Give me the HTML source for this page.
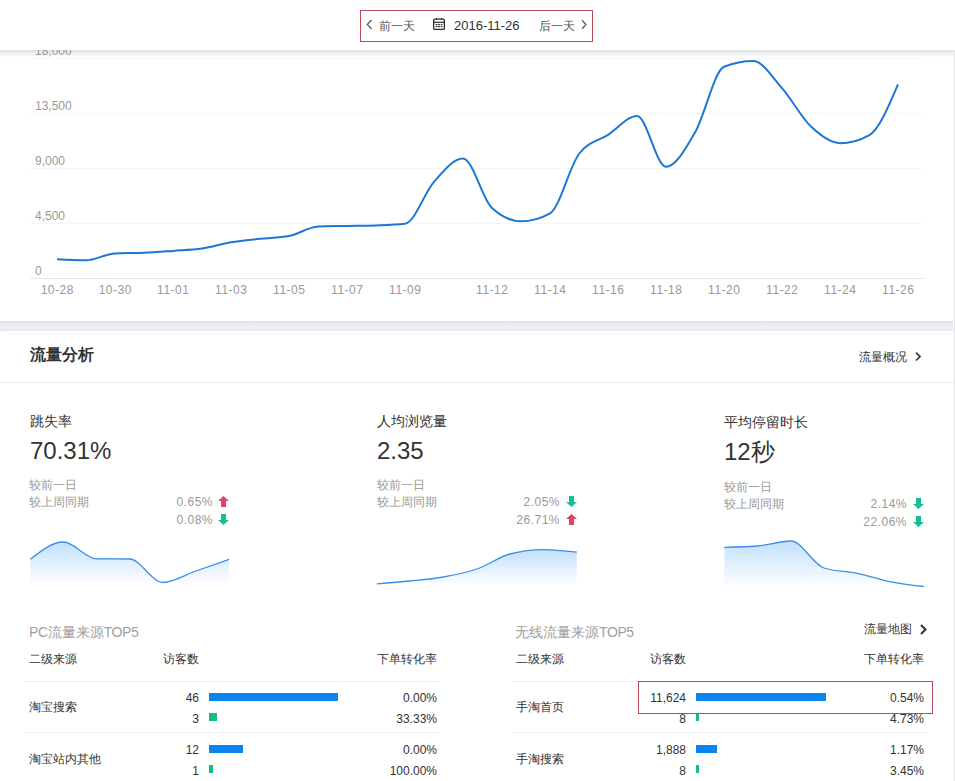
<!DOCTYPE html>
<html><head><meta charset="utf-8">
<style>
*{margin:0;padding:0;box-sizing:border-box}
html,body{width:955px;height:781px;overflow:hidden;background:#fff;font-family:"Liberation Sans",sans-serif;color:#333}
.a{position:absolute;white-space:nowrap}
#hdr{position:absolute;left:0;top:0;width:955px;height:50px;background:#fff;z-index:5}
#shd{position:absolute;left:0;top:50px;width:955px;height:7px;background:linear-gradient(#e1e1e1,#e9e9e9 30%,#f4f4f4 60%,#fff)}
#box{position:absolute;left:360px;top:10px;width:233px;height:32px;border:1px solid #b94955}
.hd{font-size:12px;line-height:13px;color:#555}
.yl{position:absolute;left:35px;font-size:12px;line-height:12px;color:#999}
.xl{position:absolute;top:284px;width:40px;text-align:center;font-size:12px;line-height:12px;color:#999;letter-spacing:0.5px;text-indent:0.5px}
#vline{position:absolute;left:954px;top:50px;width:1px;height:731px;background:#e3e3e3}
#band{position:absolute;left:0;top:321px;width:953px;height:10px;background:linear-gradient(#dfe2e6 0,#dfe2e6 10%,#e8eaef 20%,#edeef6 50%,#eceef5 80%,#e6e7ec 90%,#e6e7ec 100%)}
.lbl{font-size:14px;line-height:14px;color:#333}
.big{font-size:24px;line-height:24px;color:#333}
.cmp{font-size:12px;line-height:12px;color:#999}
.val{font-size:12px;line-height:12px;color:#999;text-align:right;width:60px;letter-spacing:0.5px}
.t12{font-size:12px;line-height:12px;color:#333}
.num{font-size:12px;line-height:12px;color:#333;text-align:right;width:80px}
.ttl{font-size:14px;line-height:14px;color:#a0a0a0}
.ttl span{letter-spacing:-0.4px}
.sep{position:absolute;height:1px;background:#efefef}
.bb{position:absolute;height:8px;background:#0c84ee}
.tb{position:absolute;height:8px;background:#17bb8e}
</style></head><body>
<div id="shd"></div>
<svg width="955" height="781" style="position:absolute;left:0;top:0">
<defs>
<linearGradient id="g1" x1="0" y1="0" x2="0" y2="1"><stop offset="0" stop-color="#1f8bf5" stop-opacity="0.27"/><stop offset="1" stop-color="#1f8bf5" stop-opacity="0.01"/></linearGradient>
</defs>
<g fill="#f5f5f5">
<rect x="30" y="58" width="894" height="1"/>
<rect x="30" y="113" width="894" height="1"/>
<rect x="30" y="168" width="894" height="1"/>
<rect x="30" y="223" width="894" height="1"/>
</g>
<rect x="30" y="278" width="894" height="1" fill="#e8e8e8"/>
<path d="M57.00 259.30 C66.67 259.80 76.33 260.30 86.00 260.30 C95.67 260.30 105.33 253.80 115.00 253.40 C124.67 253.00 134.33 253.20 144.00 252.80 C153.67 252.40 163.33 251.60 173.00 250.90 C182.67 250.20 192.33 250.03 202.00 248.60 C211.67 247.17 221.33 243.93 231.00 242.30 C240.67 240.67 250.33 239.85 260.00 238.80 C269.67 237.75 279.33 237.87 289.00 236.00 C298.67 234.13 308.33 226.90 318.00 226.50 C327.67 226.10 337.33 226.08 347.00 225.90 C356.67 225.72 366.33 225.73 376.00 225.40 C385.67 225.07 395.33 224.87 405.00 223.80 C414.67 222.73 424.33 192.80 434.00 181.90 C443.67 171.00 453.33 158.40 463.00 158.40 C472.67 158.40 482.33 199.13 492.00 208.00 C501.67 216.87 511.33 221.30 521.00 221.30 C530.67 221.30 540.33 218.63 550.00 213.30 C559.67 207.97 569.33 166.80 579.00 154.00 C588.67 141.20 598.33 141.13 608.00 134.80 C617.67 128.47 627.33 116.00 637.00 116.00 C646.67 116.00 656.33 166.70 666.00 166.70 C675.67 166.70 685.33 149.15 695.00 132.50 C704.67 115.85 714.33 70.73 724.00 66.80 C733.67 62.87 743.33 60.90 753.00 60.90 C762.67 60.90 772.33 77.25 782.00 88.20 C791.67 99.15 801.33 117.43 811.00 126.60 C820.67 135.77 830.33 143.20 840.00 143.20 C849.67 143.20 859.33 140.57 869.00 135.30 C878.67 130.03 888.33 107.22 898.00 84.40" fill="none" stroke="#1c78d4" stroke-width="2"/>
<path d="M30.30 559.30 C41.34 550.65 52.38 542.00 63.42 542.00 C74.46 542.00 85.50 558.67 96.54 558.80 C107.58 558.93 118.62 558.87 129.66 559.00 C140.70 559.13 151.74 582.50 162.78 582.50 C173.82 582.50 184.86 574.85 195.90 571.00 C206.94 567.15 217.98 563.27 229.02 559.40 L229.00 583.50 L30.30 583.50 Z" fill="url(#g1)"/>
<path d="M30.30 559.30 C41.34 550.65 52.38 542.00 63.42 542.00 C74.46 542.00 85.50 558.67 96.54 558.80 C107.58 558.93 118.62 558.87 129.66 559.00 C140.70 559.13 151.74 582.50 162.78 582.50 C173.82 582.50 184.86 574.85 195.90 571.00 C206.94 567.15 217.98 563.27 229.02 559.40" fill="none" stroke="#3a8ee6" stroke-width="1.3"/>
<path d="M376.80 583.80 C387.91 582.97 399.02 582.13 410.13 581.00 C421.24 579.87 432.35 579.00 443.46 577.00 C454.57 575.00 465.68 572.83 476.79 569.00 C487.90 565.17 499.01 556.93 510.12 554.00 C521.23 551.07 532.34 549.60 543.45 549.60 C554.56 549.60 565.67 550.90 576.78 552.20 L576.80 584.00 L376.80 584.00 Z" fill="url(#g1)"/>
<path d="M376.80 583.80 C387.91 582.97 399.02 582.13 410.13 581.00 C421.24 579.87 432.35 579.00 443.46 577.00 C454.57 575.00 465.68 572.83 476.79 569.00 C487.90 565.17 499.01 556.93 510.12 554.00 C521.23 551.07 532.34 549.60 543.45 549.60 C554.56 549.60 565.67 550.90 576.78 552.20" fill="none" stroke="#3a8ee6" stroke-width="1.3"/>
<path d="M724.30 547.30 C735.38 547.08 746.47 546.87 757.55 546.00 C768.63 545.13 779.72 541.00 790.80 541.00 C801.88 541.00 812.97 564.47 824.05 568.00 C835.13 571.53 846.22 571.00 857.30 573.30 C868.38 575.60 879.47 579.60 890.55 581.80 C901.63 584.00 912.72 585.25 923.80 586.50 L923.80 586.50 L724.30 586.50 Z" fill="url(#g1)"/>
<path d="M724.30 547.30 C735.38 547.08 746.47 546.87 757.55 546.00 C768.63 545.13 779.72 541.00 790.80 541.00 C801.88 541.00 812.97 564.47 824.05 568.00 C835.13 571.53 846.22 571.00 857.30 573.30 C868.38 575.60 879.47 579.60 890.55 581.80 C901.63 584.00 912.72 585.25 923.80 586.50" fill="none" stroke="#3a8ee6" stroke-width="1.3"/>
</svg>
<div id="hdr">
 <div id="box"></div>
 <svg class="a" style="left:365px;top:18px" width="9" height="13" viewBox="0 0 9 13"><path d="M6.5 2 L2.3 6.5 L6.5 11" fill="none" stroke="#666" stroke-width="1.4"/></svg>
 <div class="a hd" style="left:379px;top:20px">前一天</div>
 <svg class="a" style="left:433px;top:18px" width="12" height="12" viewBox="0 0 12 12"><g fill="none" stroke="#2a2a2a"><rect x="0.65" y="1.15" width="10.7" height="10.2" rx="1.2" stroke-width="1.3"/><path d="M0.6 4.3H11.4" stroke-width="1.2"/><path d="M3.5 0V1.6M8.5 0V1.6" stroke-width="1"/></g><g fill="#2a2a2a"><rect x="2.7" y="6" width="1.7" height="1.2"/><rect x="5.2" y="6" width="1.7" height="1.2"/><rect x="7.7" y="6" width="1.7" height="1.2"/><rect x="2.7" y="8" width="1.7" height="1.2"/><rect x="5.2" y="8" width="1.7" height="1.2"/><rect x="7.7" y="8" width="1.7" height="1.2"/></g></svg>
 <div class="a hd" style="left:454px;top:19px;color:#333;font-size:13px">2016-11-26</div>
 <div class="a hd" style="left:539px;top:20px">后一天</div>
 <svg class="a" style="left:579px;top:18px" width="9" height="13" viewBox="0 0 9 13"><path d="M3 2.2 L7 6.5 L3 10.8" fill="none" stroke="#666" stroke-width="1.4"/></svg>
</div>
<div class="yl" style="top:45px">18,000</div>
<div class="yl" style="top:100px">13,500</div>
<div class="yl" style="top:155px">9,000</div>
<div class="yl" style="top:210px">4,500</div>
<div class="yl" style="top:265px">0</div>
<div class="xl" style="left:37px">10-28</div><div class="xl" style="left:95px">10-30</div><div class="xl" style="left:153px">11-01</div><div class="xl" style="left:211px">11-03</div><div class="xl" style="left:269px">11-05</div><div class="xl" style="left:327px">11-07</div><div class="xl" style="left:385px">11-09</div><div class="xl" style="left:472px">11-12</div><div class="xl" style="left:530px">11-14</div><div class="xl" style="left:588px">11-16</div><div class="xl" style="left:646px">11-18</div><div class="xl" style="left:704px">11-20</div><div class="xl" style="left:762px">11-22</div><div class="xl" style="left:820px">11-24</div><div class="xl" style="left:878px">11-26</div>
<div id="vline"></div>
<div id="band"></div>
<div class="sep" style="left:8px;top:333px;width:944px;background:#f6f6f6"></div>

<div class="a" style="left:30px;top:347px;font-size:16px;line-height:16px;font-weight:bold;color:#333">流量分析</div>
<div class="a t12" style="left:859px;top:351px">流量概况</div>
<svg class="a" style="left:913px;top:350px" width="10" height="13" viewBox="0 0 10 13"><path d="M3 2.7 L7 6.6 L3 10.5" fill="none" stroke="#3a3a3a" stroke-width="1.7"/></svg>
<div class="sep" style="left:0;top:382px;width:954px;background:#ebebeb"></div>

<div class="a lbl" style="left:30px;top:414px">跳失率</div>
<div class="a big" style="left:30px;top:439px">70.31%</div>
<div class="a cmp" style="left:29px;top:479px">较前一日</div>
<div class="a cmp" style="left:29px;top:496px">较上周同期</div>
<div class="a val" style="left:153px;top:496px">0.65%</div>
<div class="a val" style="left:153px;top:514px">0.08%</div>
<svg class="a" style="left:218px;top:496px" width="11" height="11" viewBox="0 0 11 11"><path d="M5.5 0 L11 5 L8 5 L8 11 L3 11 L3 5 L0 5 Z" fill="#e2416a"/></svg> <svg class="a" style="left:218px;top:514px" width="11" height="11" viewBox="0 0 11 11"><path d="M3 0 L8 0 L8 6 L11 6 L5.5 11 L0 6 L3 6 Z" fill="#14bf96"/></svg>

<div class="a lbl" style="left:377px;top:414px">人均浏览量</div>
<div class="a big" style="left:377px;top:439px">2.35</div>
<div class="a cmp" style="left:377px;top:479px">较前一日</div>
<div class="a cmp" style="left:377px;top:496px">较上周同期</div>
<div class="a val" style="left:500px;top:496px">2.05%</div>
<div class="a val" style="left:500px;top:514px">26.71%</div>
<svg class="a" style="left:566px;top:496px" width="11" height="11" viewBox="0 0 11 11"><path d="M3 0 L8 0 L8 6 L11 6 L5.5 11 L0 6 L3 6 Z" fill="#14bf96"/></svg> <svg class="a" style="left:566px;top:514px" width="11" height="11" viewBox="0 0 11 11"><path d="M5.5 0 L11 5 L8 5 L8 11 L3 11 L3 5 L0 5 Z" fill="#e2416a"/></svg>

<div class="a lbl" style="left:724px;top:415px">平均停留时长</div>
<div class="a big" style="left:724px;top:440px">12秒</div>
<div class="a cmp" style="left:724px;top:481px">较前一日</div>
<div class="a cmp" style="left:724px;top:498px">较上周同期</div>
<div class="a val" style="left:847px;top:498px">2.14%</div>
<div class="a val" style="left:847px;top:516px">22.06%</div>
<svg class="a" style="left:913px;top:498px" width="11" height="11" viewBox="0 0 11 11"><path d="M3 0 L8 0 L8 6 L11 6 L5.5 11 L0 6 L3 6 Z" fill="#14bf96"/></svg> <svg class="a" style="left:913px;top:516px" width="11" height="11" viewBox="0 0 11 11"><path d="M3 0 L8 0 L8 6 L11 6 L5.5 11 L0 6 L3 6 Z" fill="#14bf96"/></svg>

<!-- PC table -->
<div class="a ttl" style="left:29px;top:625px"><span>PC</span>流量来源<span>TOP5</span></div>
<div class="a t12" style="left:29px;top:653px">二级来源</div>
<div class="a t12" style="left:163px;top:653px">访客数</div>
<div class="a t12" style="left:377px;top:653px">下单转化率</div>
<div class="sep" style="left:24px;top:681px;width:416px"></div>
<div class="a t12" style="left:29px;top:701px">淘宝搜索</div>
<div class="a num" style="left:119px;top:692px">46</div>
<div class="bb" style="left:209px;top:693px;width:129px"></div>
<div class="a num" style="left:357px;top:692px">0.00%</div>
<div class="a num" style="left:119px;top:713px">3</div>
<div class="tb" style="left:209px;top:713px;width:8px"></div>
<div class="a num" style="left:357px;top:713px">33.33%</div>
<div class="sep" style="left:24px;top:732px;width:416px"></div>
<div class="a t12" style="left:29px;top:753px">淘宝站内其他</div>
<div class="a num" style="left:119px;top:744px">12</div>
<div class="bb" style="left:209px;top:745px;width:34px"></div>
<div class="a num" style="left:357px;top:744px">0.00%</div>
<div class="a num" style="left:119px;top:765px">1</div>
<div class="tb" style="left:209px;top:765px;width:4px"></div>
<div class="a num" style="left:357px;top:765px">100.00%</div>

<!-- Mobile table -->
<div class="a ttl" style="left:515px;top:625px">无线流量来源<span>TOP5</span></div>
<div class="a t12" style="left:864px;top:623px">流量地图</div>
<svg class="a" style="left:918px;top:623px" width="10" height="13" viewBox="0 0 10 13"><path d="M3 2 L7.5 6.5 L3 11" fill="none" stroke="#333" stroke-width="2"/></svg>
<div class="a t12" style="left:516px;top:653px">二级来源</div>
<div class="a t12" style="left:650px;top:653px">访客数</div>
<div class="a t12" style="left:864px;top:653px">下单转化率</div>
<div class="sep" style="left:512px;top:681px;width:416px"></div>
<div class="a t12" style="left:516px;top:701px">手淘首页</div>
<div class="a num" style="left:606px;top:692px">11,624</div>
<div class="bb" style="left:696px;top:693px;width:130px"></div>
<div class="a num" style="left:844px;top:692px">0.54%</div>
<div class="a num" style="left:606px;top:713px">8</div>
<div class="tb" style="left:696px;top:713px;width:3px"></div>
<div class="a num" style="left:844px;top:713px">4.73%</div>
<div class="sep" style="left:512px;top:732px;width:416px"></div>
<div class="a t12" style="left:516px;top:753px">手淘搜索</div>
<div class="a num" style="left:606px;top:744px">1,888</div>
<div class="bb" style="left:696px;top:745px;width:21px"></div>
<div class="a num" style="left:844px;top:744px">1.17%</div>
<div class="a num" style="left:606px;top:765px">8</div>
<div class="tb" style="left:696px;top:765px;width:3px"></div>
<div class="a num" style="left:844px;top:765px">3.45%</div>
<div class="a" style="left:638px;top:681px;width:295px;height:33px;border:1px solid #b94a55"></div>
</body></html>
